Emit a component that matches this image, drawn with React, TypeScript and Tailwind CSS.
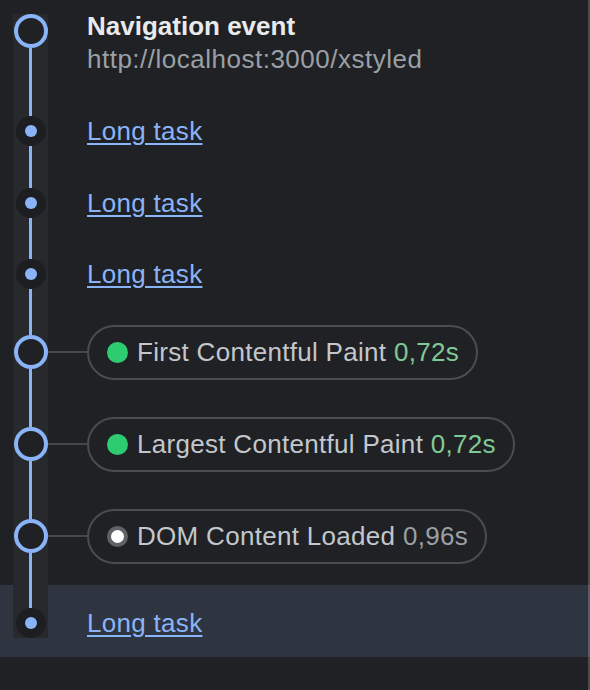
import React from 'react';

type Row =
  | { kind: 'nav'; h: number; top: number }
  | { kind: 'task'; h: number; top: number; last?: boolean; active?: boolean }
  | { kind: 'metric'; h: number; top: number; label: string; value: string; dot: 'green' | 'white'; valueTone: 'green' | 'gray' };

const rows: Row[] = [
  { kind: 'nav', h: 95, top: 14 },
  { kind: 'task', h: 72, top: 21 },
  { kind: 'task', h: 72, top: 21 },
  { kind: 'task', h: 71, top: 20 },
  { kind: 'metric', h: 84, top: 25, label: 'First Contentful Paint', value: '0,72s', dot: 'green', valueTone: 'green' },
  { kind: 'metric', h: 100, top: 33, label: 'Largest Contentful Paint', value: '0,72s', dot: 'green', valueTone: 'green' },
  { kind: 'metric', h: 91, top: 25, label: 'DOM Content Loaded', value: '0,96s', dot: 'white', valueTone: 'gray' },
  { kind: 'task', h: 72, top: 23, last: true, active: true },
];

const Line = ({ className = '', height }: { className?: string; height?: number }) => (
  <div className={`bg-[#28292c] flex justify-center ${className}`} style={height !== undefined ? { height } : undefined}>
    <div className="w-[3px] h-full bg-[#8ab4f8]" />
  </div>
);

const BigMarker = () => (
  <div className="bg-[#28292c] h-[34px] shrink-0 flex items-center justify-center">
    <div className="w-[34px] h-[34px] rounded-full border-4 border-[#8ab4f8] bg-[#202124]" />
  </div>
);

const SmallMarker = () => (
  <div className="bg-[#28292c] h-[30px] shrink-0 flex items-center justify-center">
    <div className="w-[30px] h-[30px] rounded-full bg-[#1d1e21] flex items-center justify-center">
      <div className="w-[12px] h-[12px] rounded-full bg-[#8ab4f8]" />
    </div>
  </div>
);

const TimelineRow: React.FC<{ row: Row; first: boolean }> = ({ row, first }) => {
  const big = row.kind !== 'task';
  const markerH = big ? 'h-[34px]' : 'h-[30px]';
  const last = row.kind === 'task' && row.last;
  const active = row.kind === 'task' && row.active;

  return (
    <div className={`flex ${active ? 'bg-[#2f3441]' : ''}`} style={{ height: row.h }}>
      {/* rail */}
      <div className="ml-[13px] w-[35px] shrink-0 flex flex-col">
        {first ? <div className="shrink-0" style={{ height: row.top }} /> : <Line className="shrink-0" height={row.top} />}
        {big ? <BigMarker /> : <SmallMarker />}
        {!last && <Line className="flex-1" />}
      </div>

      {/* content */}
      {row.kind === 'nav' ? (
        <div className="pl-[39px] pt-[10px] text-[26px] leading-[33px]">
          <div className="font-bold text-[#e8eaed]">Navigation event</div>
          <div className="text-[#9aa0a6] tracking-[0.5px]">http://localhost:3000/xstyled</div>
        </div>
      ) : (
        <div className="flex flex-col">
          <div className="shrink-0" style={{ height: row.top }} />
          <div className={`${markerH} flex items-center`}>
            {row.kind === 'task' ? (
              <a href="#" className="pl-[39px] text-[26px] leading-[33px] tracking-[0.3px] text-[#8ab4f8] underline underline-offset-[3px] decoration-2">
                Long task
              </a>
            ) : (
              <>
                <div className="w-[39px] h-[2px] bg-[#46484c] shrink-0" />
                <div className="h-[55px] shrink-0 rounded-full border-2 border-[#4a4c50] pl-[18px] pr-[17px] flex items-center gap-[9px] whitespace-nowrap">
                  {row.dot === 'green' ? (
                    <span className="w-[21px] h-[21px] rounded-full bg-[#2ecc71] shrink-0" />
                  ) : (
                    <span className="w-[21px] h-[21px] rounded-full bg-white border-4 border-[#5f6368] shrink-0" />
                  )}
                  <span className="text-[26px] leading-[33px] tracking-[0.3px] text-[#c3c7cc]">
                    {row.label}{' '}
                    <span className={row.valueTone === 'green' ? 'text-[#81c995]' : 'text-[#9aa0a6]'}>{row.value}</span>
                  </span>
                </div>
              </>
            )}
          </div>
        </div>
      )}
    </div>
  );
};

const App: React.FC = () => {
  return (
    <div
      className="relative min-h-screen w-full bg-[#202124] overflow-hidden"
      style={{ fontFamily: '"Liberation Sans", Arial, sans-serif' }}
    >
      {rows.map((row, i) => (
        <TimelineRow key={i} row={row} first={i === 0} />
      ))}
      <div className="pointer-events-none absolute right-0 top-0 h-full w-[2px] bg-white/20" />
    </div>
  );
};

export default App;
